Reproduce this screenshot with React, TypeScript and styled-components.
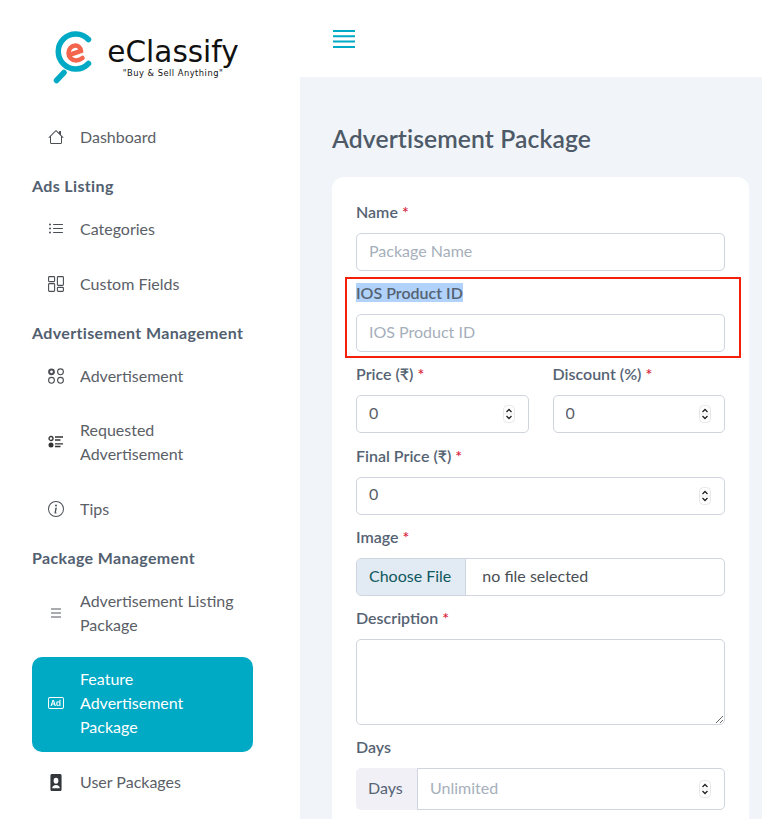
import { ReactNode } from "react";
import styled, { createGlobalStyle } from "styled-components";
import { BsBadgeAd, BsHouse, BsInfoCircle, BsListUl } from "react-icons/bs";

const GlobalStyle = createGlobalStyle`
  html, body {
    margin: 0;
    padding: 0;
    height: 819px;
    overflow: hidden;
    background: #f1f5f9;
  }
  * {
    box-sizing: border-box;
  }
  body {
    font-family: "Lato", "Open Sans", sans-serif;
    font-size: 16px;
    color: #4b5563;
  }
`;

const Page = styled.div`
  display: flex;
  height: 819px;
  overflow: hidden;
`;

const Sidebar = styled.aside`
  flex: 0 0 300px;
  background: #fff;
`;

const LogoArea = styled.div`
  height: 113.5px;
  padding: 30px 0 0 53px;
  display: flex;
  align-items: flex-start;
  gap: 13px;
`;

const LogoText = styled.div`
  display: flex;
  flex-direction: column;
  align-items: center;
  width: 134px;
  padding-top: 5px;
`;

const LogoName = styled.div`
  font-family: "DejaVu Sans", sans-serif;
  font-size: 29.5px;
  line-height: 34px;
  color: #111;
`;

const LogoTagline = styled.div`
  margin-top: -1px;
  font-family: "DejaVu Sans", sans-serif;
  font-size: 8.3px;
  line-height: 10px;
  letter-spacing: 0.5px;
  color: #111;
  white-space: nowrap;
`;

const Nav = styled.nav`
  display: flex;
  flex-direction: column;
  padding: 0 47px 0 32px;
`;

const NavHeading = styled.div`
  height: 45px;
  padding-top: 13.5px;
  font-size: 16px;
  font-weight: 700;
  line-height: 24px;
  letter-spacing: 0.35px;
  color: #526070;
  white-space: nowrap;
`;

const NavItem = styled.a<{ $active?: boolean }>`
  display: flex;
  align-items: center;
  gap: 16px;
  padding: ${(p) => (p.$active ? "10.5px 16px 12.5px" : "11.35px 16px 11.65px")};
  margin-bottom: ${(p) => (p.$active ? "-0.5px" : "0")};
  border-radius: 10px;
  font-size: 16px;
  line-height: 24px;
  color: ${(p) => (p.$active ? "#fff" : "#5b6067")};
  background: ${(p) => (p.$active ? "#00a9c4" : "transparent")};

  & + & {
    margin-top: 7.8px;
  }
`;

const NavIcon = styled.span`
  flex: 0 0 16px;
  width: 16px;
  height: 16px;
  display: flex;
  align-items: center;
  justify-content: center;
  font-size: 16px;
`;

const Main = styled.main`
  flex: 1;
  min-width: 0;
`;

const TopBar = styled.header`
  height: 77px;
  padding: 29px 0 0 33px;
  background: #fff;
`;

const Content = styled.div`
  padding: 45px 13px 0 32px;
`;

const Title = styled.h1`
  margin: 0 0 21px;
  font-size: 24.7px;
  font-weight: 600;
  line-height: 34px;
  letter-spacing: 0.1px;
  color: #4e5a68;
`;

const Card = styled.section`
  position: relative;
  padding: 24px;
  border-radius: 12px;
  background: #fff;
`;

const Form = styled.form`
  display: flex;
  flex-direction: column;
  gap: 11.2px;
`;

const TwoCols = styled.div`
  display: grid;
  grid-template-columns: minmax(0, 1fr) minmax(0, 1fr);
  gap: 24px;
`;

const Field = styled.div`
  display: flex;
  flex-direction: column;
  gap: 8px;
`;

const Label = styled.label`
  padding-bottom: 2px;
  font-size: 16px;
  font-weight: 600;
  line-height: 22px;
  color: #566373;
`;

const Selected = styled.span`
  background: #b0d2fb;
`;

const Required = styled.span`
  margin-left: 4px;
  color: #d9263f;
`;

const InputBox = styled.div`
  display: flex;
  align-items: center;
  height: 38px;
  padding: 0 12px 0;
  border: 1px solid #cfd4de;
  border-radius: 5px;
  background: #fff;
`;

const Input = styled.input`
  flex: 1;
  min-width: 0;
  padding: 0 0 4px;
  border: 0;
  outline: 0;
  background: transparent;
  font: inherit;
  font-size: 16px;
  color: #5b6067;

  &::placeholder {
    color: #a6afbb;
    opacity: 1;
  }
`;

const Stepper = styled.svg`
  flex: 0 0 12px;
  width: 12px;
  height: 18px;
  margin-right: 1px;
`;

const FileBox = styled.div`
  display: flex;
  align-items: center;
  height: 38px;
  overflow: hidden;
  border: 1px solid #cfd4de;
  border-radius: 5px;
  background: #fff;
  font-size: 16px;
`;

const FileButton = styled.span`
  display: flex;
  align-items: center;
  align-self: stretch;
  padding: 0 14px 2px 12px;
  border-right: 1px solid #cfd4de;
  background: #e2eaf3;
  color: #0f5960;
`;

const FileName = styled.span`
  padding: 0 0 2px 16px;
  color: #4a4f55;
`;

const TextArea = styled.textarea`
  display: block;
  width: 100%;
  height: 86px;
  padding: 8px 12px;
  border: 1px solid #cfd4de;
  border-radius: 5px;
  outline: 0;
  font: inherit;
  resize: vertical;
`;

const InputGroup = styled.div`
  display: flex;
  height: 42px;
`;

const GroupAddon = styled.span`
  display: flex;
  align-items: center;
  min-width: 61px;
  padding: 0 12px 4px;
  border-radius: 5px 0 0 5px;
  background: #f0f0f6;
  font-size: 16px;
  color: #566373;
`;

const GroupInput = styled(InputBox)`
  flex: 1;
  height: 42px;
  border-radius: 0 5px 5px 0;
`;

// red annotation drawn over the card around the IOS field
const Highlight = styled.div`
  position: absolute;
  left: 13px;
  top: 100px;
  width: 396px;
  height: 81px;
  border: 2px solid #f5200c;
  pointer-events: none;
`;

function Logo() {
  return (
    <svg width="40" height="54" viewBox="0 0 40 54" fill="none">
      <path
        d="M35.5 9.500A17.500 17.500 0 1 0 35.500 33.500"
        stroke="#00a9c4"
        strokeWidth="5.500"
        strokeLinecap="round"
      />
      <path d="M11 42.500L3.500 50.500" stroke="#00a9c4" strokeWidth="5.500" strokeLinecap="round" />
      <path
        d="M17.500 24.500L28 21C27.500 17.500 25 15.500 22.500 15.500C18.500 15.500 15.500 19 15.500 23C15.500 27.500 19 30.500 23 30.500C25.500 30.500 27.500 29.500 29.500 28"
        stroke="#f4654e"
        strokeWidth="4.500"
        strokeLinecap="round"
      />
    </svg>
  );
}

function MenuBars() {
  return (
    <svg width="22" height="20" viewBox="0 0 22 20" stroke="#00a9c4" strokeWidth="2">
      <path d="M0 2H22M0 7.300H22M0 12.600H22M0 18H22" />
    </svg>
  );
}

function FieldsIcon() {
  return (
    <svg width="16" height="16" viewBox="0 0 16 16" fill="none" stroke="#4a4f55" strokeWidth="1.100">
      <rect x="0.600" y="0.600" width="6" height="5" rx="0.800" />
      <rect x="0.600" y="7.600" width="6" height="7.800" rx="0.800" />
      <rect x="9.400" y="0.600" width="6" height="8.800" rx="0.800" />
      <rect x="9.400" y="11.400" width="6" height="4" rx="0.800" />
    </svg>
  );
}

function CirclesIcon() {
  return (
    <svg width="16" height="16" viewBox="0 0 16 16" fill="none" stroke="#4a4f55" strokeWidth="1.100">
      <circle cx="3.500" cy="3.800" r="2.400" strokeWidth="2" />
      <circle cx="12.500" cy="3.800" r="2.900" />
      <circle cx="3.500" cy="12.300" r="2.900" />
      <circle cx="12.500" cy="12.300" r="2.900" />
    </svg>
  );
}

function RequestsIcon() {
  return (
    <svg width="16" height="16" viewBox="0 0 16 16" fill="none" stroke="#333">
      <circle cx="3" cy="4.500" r="2" strokeWidth="1.300" />
      <circle cx="3" cy="11" r="2.500" fill="#333" stroke="none" />
      <path d="M7 3H15M7 6H12.500M7 9.800H15M7 12.500H12.500" strokeWidth="1.300" />
    </svg>
  );
}

function ThreeBars() {
  return (
    <svg width="12" height="12" viewBox="0 0 12 12" stroke="#8d9095" strokeWidth="1.500">
      <path d="M1 2H11M1 6H11M1 10H11" />
    </svg>
  );
}

function ContactIcon() {
  return (
    <svg width="12" height="17" viewBox="0 0 14 16" preserveAspectRatio="none">
      <path
        fillRule="evenodd"
        fill="#33373c"
        d="M2 0H12A1.500 1.500 0 0 1 13.500 1.500V14.500A1.500 1.500 0 0 1 12 16H2A1.500 1.500 0 0 1 .5 14.500V1.500A1.500 1.500 0 0 1 2 0ZM7 3.500A2.800 2.800 0 1 0 7 9.100A2.800 2.800 0 1 0 7 3.500ZM2.500 13.500H11.500C11.500 11.500 9.500 10.300 7 10.300C4.500 10.300 2.500 11.500 2.500 13.500Z"
      />
    </svg>
  );
}

function Spinner() {
  return (
    <Stepper viewBox="0 0 12 18" fill="none">
      <rect x="0.500" y="0.500" width="11" height="17" rx="4" stroke="#e6e7ea" fill="#fff" />
      <path d="M1 9H11" stroke="#eceded" />
      <path d="M3.500 7L6 4.500L8.500 7M3.500 11L6 13.500L8.500 11" stroke="#222" strokeWidth="1.300" />
    </Stepper>
  );
}

interface MenuEntry {
  heading?: string;
  label?: ReactNode;
  icon?: ReactNode;
  active?: boolean;
}

const menu: MenuEntry[] = [
  { label: "Dashboard", icon: <BsHouse color="#4a4f55" /> },
  { heading: "Ads Listing" },
  { label: "Categories", icon: <BsListUl color="#4a4f55" /> },
  { label: "Custom Fields", icon: <FieldsIcon /> },
  { heading: "Advertisement Management" },
  { label: "Advertisement", icon: <CirclesIcon /> },
  { label: "Requested Advertisement", icon: <RequestsIcon /> },
  { label: "Tips", icon: <BsInfoCircle color="#4a4f55" /> },
  { heading: "Package Management" },
  { label: "Advertisement Listing Package", icon: <ThreeBars /> },
  { label: "Feature Advertisement Package", icon: <BsBadgeAd color="#fff" />, active: true },
  { label: "User Packages", icon: <ContactIcon /> },
];

export default function App() {
  return (
    <>
      <GlobalStyle />
      <Page>
        <Sidebar>
          <LogoArea>
            <Logo />
            <LogoText>
              <LogoName>eClassify</LogoName>
              <LogoTagline>"Buy &amp; Sell Anything"</LogoTagline>
            </LogoText>
          </LogoArea>
          <Nav>
            {menu.map((entry, i) =>
              entry.heading ? (
                <NavHeading key={i}>{entry.heading}</NavHeading>
              ) : (
                <NavItem key={i} $active={entry.active}>
                  <NavIcon>{entry.icon}</NavIcon>
                  <span>{entry.label}</span>
                </NavItem>
              )
            )}
          </Nav>
        </Sidebar>
        <Main>
          <TopBar>
            <MenuBars />
          </TopBar>
          <Content>
            <Title>Advertisement Package</Title>
            <Card>
              <Form>
                <Field>
                  <Label>
                    Name<Required>*</Required>
                  </Label>
                  <InputBox>
                    <Input placeholder="Package Name" />
                  </InputBox>
                </Field>
                <Field>
                  <Label>
                    <Selected>IOS Product ID</Selected>
                  </Label>
                  <InputBox>
                    <Input placeholder="IOS Product ID" />
                  </InputBox>
                </Field>
                <TwoCols>
                  <Field>
                    <Label>
                      Price (₹)<Required>*</Required>
                    </Label>
                    <InputBox>
                      <Input defaultValue="0" />
                      <Spinner />
                    </InputBox>
                  </Field>
                  <Field>
                    <Label>
                      Discount (%)<Required>*</Required>
                    </Label>
                    <InputBox>
                      <Input defaultValue="0" />
                      <Spinner />
                    </InputBox>
                  </Field>
                </TwoCols>
                <Field>
                  <Label>
                    Final Price (₹)<Required>*</Required>
                  </Label>
                  <InputBox>
                    <Input defaultValue="0" />
                    <Spinner />
                  </InputBox>
                </Field>
                <Field>
                  <Label>
                    Image<Required>*</Required>
                  </Label>
                  <FileBox>
                    <FileButton>Choose File</FileButton>
                    <FileName>no file selected</FileName>
                  </FileBox>
                </Field>
                <Field>
                  <Label>
                    Description<Required>*</Required>
                  </Label>
                  <TextArea />
                </Field>
                <Field>
                  <Label>Days</Label>
                  <InputGroup>
                    <GroupAddon>Days</GroupAddon>
                    <GroupInput>
                      <Input placeholder="Unlimited" />
                      <Spinner />
                    </GroupInput>
                  </InputGroup>
                </Field>
              </Form>
              <Highlight />
            </Card>
          </Content>
        </Main>
      </Page>
    </>
  );
}
